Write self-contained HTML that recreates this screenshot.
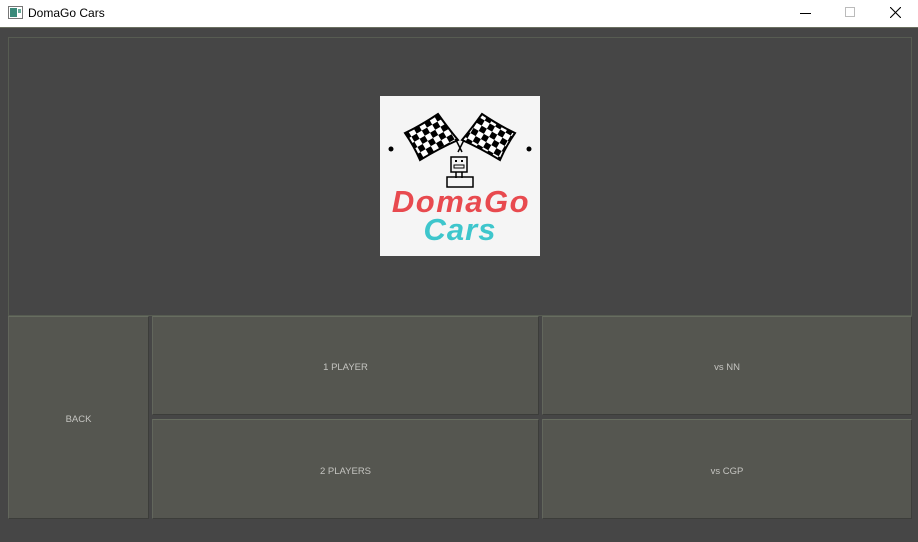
<!DOCTYPE html>
<html><head><style>
*{margin:0;padding:0;box-sizing:border-box}
body{width:918px;height:542px;background:#464646;position:relative;overflow:hidden;font-family:"Liberation Sans",sans-serif}
.tb{position:absolute;left:0;top:0;width:918px;height:28px;background:#fff;border-bottom:1px solid #6b7060}
.tb .t{position:absolute;left:28px;top:6px;font-size:12px;color:#000}
.panel{position:absolute;left:8px;top:37px;width:904px;height:279px;border:1px solid #575c52}
.btn{position:absolute;background:#555650;border:1px solid #3c3d3a;border-top-color:#676d60;border-left-color:#62665c;color:#c4c4c0;font-size:9.5px;display:flex;align-items:center;justify-content:center;padding-top:4px}
</style></head><body>
<div class="tb">
<svg style="position:absolute;left:8px;top:6px" width="15" height="13"><rect x=".5" y=".5" width="14" height="12" fill="#fff" stroke="#777"/><rect x="2" y="2" width="7" height="9" fill="#3a8a7a"/><rect x="10" y="3" width="3" height="4" fill="#6a9"/></svg>
<div class="t">DomaGo Cars</div>
<div style="position:absolute;left:800px;top:13px;width:11px;height:1px;background:#000"></div>
<div style="position:absolute;left:845px;top:7px;width:10px;height:10px;border:1px solid #bbb"></div>
<svg style="position:absolute;left:890px;top:7px" width="11" height="11"><path d="M0 0L11 11M11 0L0 11" stroke="#000" stroke-width="1.1"/></svg>
</div>
<div class="panel"></div>
<div style="position:absolute;left:380px;top:96px;width:160px;height:160px;background:#f5f5f5">
<svg width="160" height="160" viewBox="380 96 160 160">
<defs>
<pattern id="ck" width="12" height="12" patternUnits="userSpaceOnUse" patternTransform="rotate(-30)"><rect width="12" height="12" fill="#fff"/><rect width="6" height="6" fill="#000"/><rect x="6" y="6" width="6" height="6" fill="#000"/></pattern>
<pattern id="ck2" width="12" height="12" patternUnits="userSpaceOnUse" patternTransform="rotate(30)"><rect width="12" height="12" fill="#fff"/><rect width="6" height="6" fill="#000"/><rect x="6" y="6" width="6" height="6" fill="#000"/></pattern>
</defs>
<path d="M405 133Q420 126 438 114Q448 128 458 140Q440 148 420 160Q414 146 405 133Z" fill="url(#ck)" stroke="#000" stroke-width="2"/>
<path d="M515 133Q500 126 482 114Q472 128 462 140Q480 148 500 160Q506 146 515 133Z" fill="url(#ck2)" stroke="#000" stroke-width="2"/>
<path d="M456 140L462 152M464 140L458 152" stroke="#000" stroke-width="1.5"/>
<circle cx="391" cy="149" r="2.5" fill="#000"/><circle cx="529" cy="149" r="2.5" fill="#000"/>
<rect x="451" y="157" width="16" height="15" fill="none" stroke="#000" stroke-width="1.5"/>
<rect x="455" y="160" width="2" height="2"/><rect x="461" y="160" width="2" height="2"/>
<rect x="454" y="165" width="10" height="3" fill="none" stroke="#000"/>
<path d="M456 172V178M462 172V178" stroke="#000" stroke-width="1.5"/>
<rect x="447" y="177" width="26" height="10" fill="none" stroke="#000" stroke-width="1.5"/>
<text x="461" y="212" text-anchor="middle" font-family="Liberation Sans" font-weight="bold" font-style="italic" font-size="31" letter-spacing="1.5" fill="#e84a4f">DomaGo</text>
<text x="460" y="240" text-anchor="middle" font-family="Liberation Sans" font-weight="bold" font-style="italic" font-size="31" letter-spacing="1" fill="#3ec6cc">Cars</text>
</svg></div>
<div class="btn" style="left:8px;top:316px;width:141px;height:203px">BACK</div>
<div class="btn" style="left:152px;top:316px;width:387px;height:99px">1 PLAYER</div>
<div class="btn" style="left:542px;top:316px;width:370px;height:99px">vs NN</div>
<div class="btn" style="left:152px;top:419px;width:387px;height:100px">2 PLAYERS</div>
<div class="btn" style="left:542px;top:419px;width:370px;height:100px">vs CGP</div>
</body></html>
